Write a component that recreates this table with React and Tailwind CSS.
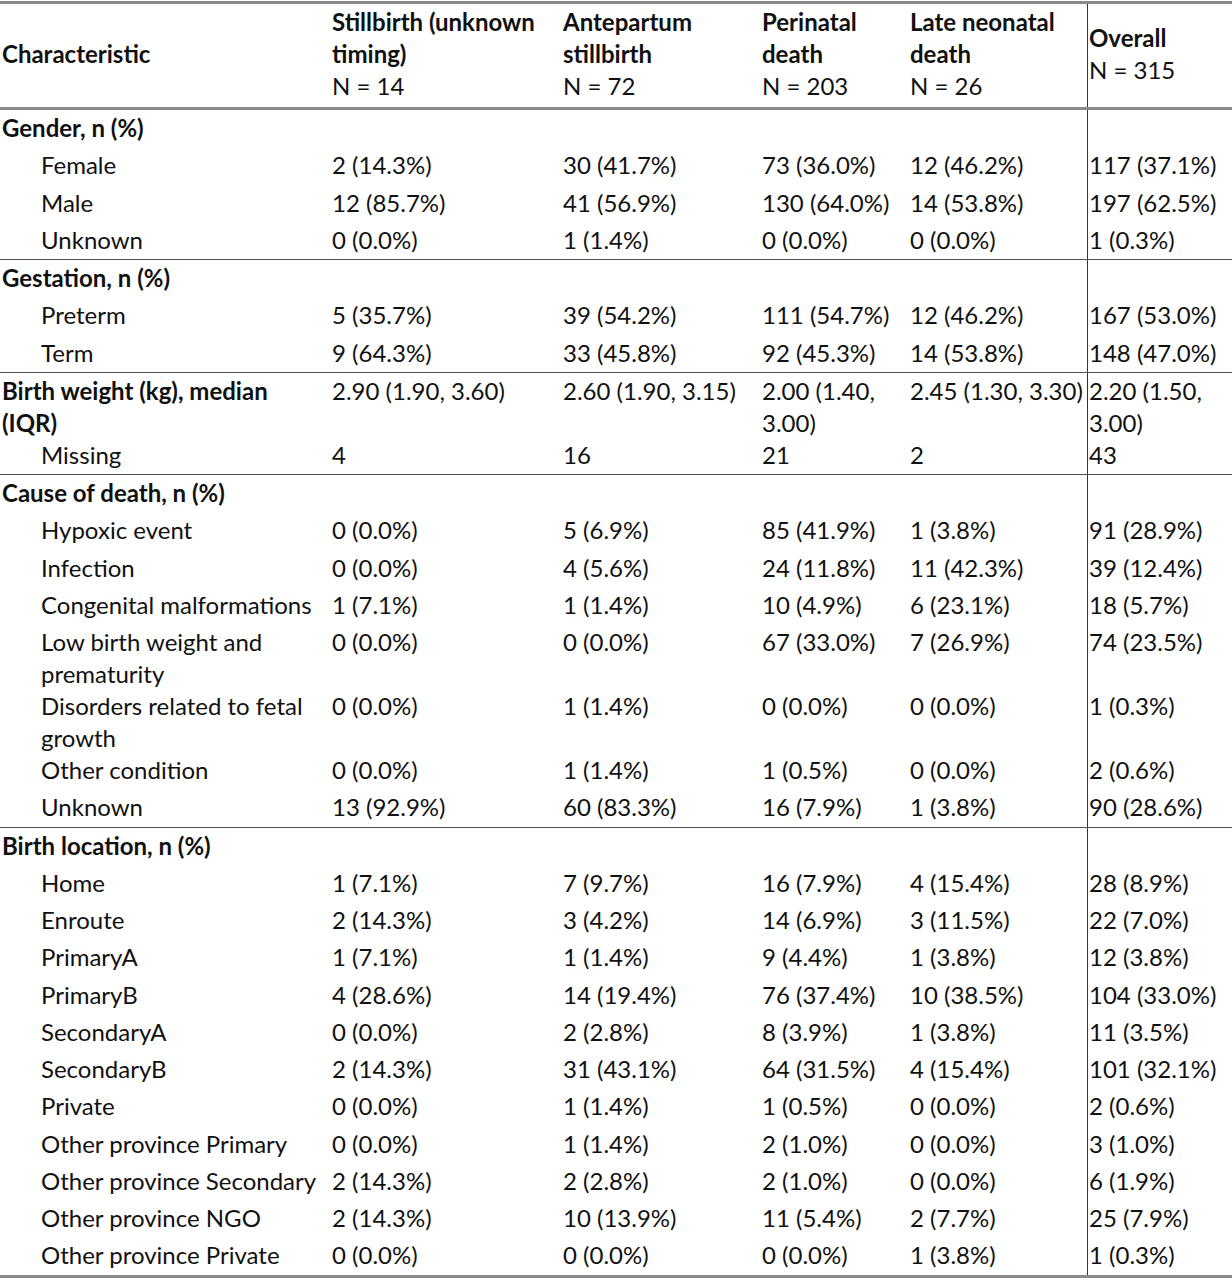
import React from 'react';

const GRID = 'grid grid-cols-[330px_231px_199px_148px_179px_145px]';

const sections = [
    {
        title: 'Gender, n (%)',
        rows: [
            ['Female', '2 (14.3%)', '30 (41.7%)', '73 (36.0%)', '12 (46.2%)', '117 (37.1%)'],
            ['Male', '12 (85.7%)', '41 (56.9%)', '130 (64.0%)', '14 (53.8%)', '197 (62.5%)'],
            ['Unknown', '0 (0.0%)', '1 (1.4%)', '0 (0.0%)', '0 (0.0%)', '1 (0.3%)'],
        ],
    },
    {
        title: 'Gestation, n (%)',
        rows: [
            ['Preterm', '5 (35.7%)', '39 (54.2%)', '111 (54.7%)', '12 (46.2%)', '167 (53.0%)'],
            ['Term', '9 (64.3%)', '33 (45.8%)', '92 (45.3%)', '14 (53.8%)', '148 (47.0%)'],
        ],
    },
    {
        title: ['Birth weight (kg), median', '(IQR)'],
        values: ['2.90 (1.90, 3.60)', '2.60 (1.90, 3.15)', ['2.00 (1.40,', '3.00)'], '2.45 (1.30, 3.30)', ['2.20 (1.50,', '3.00)']],
        rows: [
            ['Missing', '4', '16', '21', '2', '43'],
        ],
    },
    {
        title: 'Cause of death, n (%)',
        rows: [
            ['Hypoxic event', '0 (0.0%)', '5 (6.9%)', '85 (41.9%)', '1 (3.8%)', '91 (28.9%)'],
            ['Infection', '0 (0.0%)', '4 (5.6%)', '24 (11.8%)', '11 (42.3%)', '39 (12.4%)'],
            ['Congenital malformations', '1 (7.1%)', '1 (1.4%)', '10 (4.9%)', '6 (23.1%)', '18 (5.7%)'],
            [['Low birth weight and', 'prematurity'], '0 (0.0%)', '0 (0.0%)', '67 (33.0%)', '7 (26.9%)', '74 (23.5%)'],
            [['Disorders related to fetal', 'growth'], '0 (0.0%)', '1 (1.4%)', '0 (0.0%)', '0 (0.0%)', '1 (0.3%)'],
            ['Other condition', '0 (0.0%)', '1 (1.4%)', '1 (0.5%)', '0 (0.0%)', '2 (0.6%)'],
            ['Unknown', '13 (92.9%)', '60 (83.3%)', '16 (7.9%)', '1 (3.8%)', '90 (28.6%)'],
        ],
    },
    {
        title: 'Birth location, n (%)',
        rows: [
            ['Home', '1 (7.1%)', '7 (9.7%)', '16 (7.9%)', '4 (15.4%)', '28 (8.9%)'],
            ['Enroute', '2 (14.3%)', '3 (4.2%)', '14 (6.9%)', '3 (11.5%)', '22 (7.0%)'],
            ['PrimaryA', '1 (7.1%)', '1 (1.4%)', '9 (4.4%)', '1 (3.8%)', '12 (3.8%)'],
            ['PrimaryB', '4 (28.6%)', '14 (19.4%)', '76 (37.4%)', '10 (38.5%)', '104 (33.0%)'],
            ['SecondaryA', '0 (0.0%)', '2 (2.8%)', '8 (3.9%)', '1 (3.8%)', '11 (3.5%)'],
            ['SecondaryB', '2 (14.3%)', '31 (43.1%)', '64 (31.5%)', '4 (15.4%)', '101 (32.1%)'],
            ['Private', '0 (0.0%)', '1 (1.4%)', '1 (0.5%)', '0 (0.0%)', '2 (0.6%)'],
            ['Other province Primary', '0 (0.0%)', '1 (1.4%)', '2 (1.0%)', '0 (0.0%)', '3 (1.0%)'],
            ['Other province Secondary', '2 (14.3%)', '2 (2.8%)', '2 (1.0%)', '0 (0.0%)', '6 (1.9%)'],
            ['Other province NGO', '2 (14.3%)', '10 (13.9%)', '11 (5.4%)', '2 (7.7%)', '25 (7.9%)'],
            ['Other province Private', '0 (0.0%)', '0 (0.0%)', '0 (0.0%)', '1 (3.8%)', '1 (0.3%)'],
        ],
    },
];

const Lines = ({ text }) =>
    Array.isArray(text)
        ? text.map((t, i) => <div key={i}>{t}</div>)
        : <div>{text}</div>;

const Row = ({ cells, bold, indent }) => {

    const tall = cells.some((c) => Array.isArray(c));

    return (
        <div className={`${GRID} ${tall ? 'h-[64px]' : 'h-[37.25px]'}`}>
            {cells.map((c, i) => (
                <div
                    key={i}
                    className={
                        'pt-[2px] whitespace-nowrap ' +
                        (i === 0
                            ? (indent ? 'pl-[41px] ' : 'pl-[2px] ') + (bold ? 'font-bold' : '')
                            : i === 5
                                ? 'border-l border-[#333] pl-[1px]'
                                : 'pl-[2px]')
                    }
                >
                    <Lines text={c} />
                </div>
            ))}
        </div>
    );
};

const App = () => {

    return (
        <div className="bg-white w-[1232px] h-[1280px] overflow-hidden text-[#111] text-[24px] leading-[32px] font-['Lato',sans-serif]">

            {/* HEADER */}

            <div className={`${GRID} mt-[1px] h-[109px] border-y-[3px] border-[#8a8a8a] font-bold`}>

                <div className="pl-[2px] pt-[34px]">Characteristic</div>

                <div className="pl-[2px] pt-[2px]">
                    <div>Stillbirth (unknown</div>
                    <div>timing)</div>
                    <div className="font-normal">N = 14</div>
                </div>

                <div className="pl-[2px] pt-[2px]">
                    <div>Antepartum</div>
                    <div>stillbirth</div>
                    <div className="font-normal">N = 72</div>
                </div>

                <div className="pl-[2px] pt-[2px]">
                    <div>Perinatal</div>
                    <div>death</div>
                    <div className="font-normal">N = 203</div>
                </div>

                <div className="pl-[2px] pt-[2px]">
                    <div>Late neonatal</div>
                    <div>death</div>
                    <div className="font-normal">N = 26</div>
                </div>

                <div className="border-l border-[#333] pl-[1px] pt-[18px]">
                    <div>Overall</div>
                    <div className="font-normal">N = 315</div>
                </div>

            </div>

            {/* BODY */}

            {sections.map((s, i) => (
                <div key={i} className={i > 0 ? 'border-t border-[#555]' : ''}>

                    <Row
                        bold
                        cells={[s.title, ...(s.values || ['', '', '', '', ''])]}
                    />

                    {s.rows.map((r, j) => (
                        <Row key={j} indent cells={r} />
                    ))}

                </div>
            ))}

            <div className="border-t-[3px] border-[#8a8a8a]" />

        </div>
    );

};

export default App;
